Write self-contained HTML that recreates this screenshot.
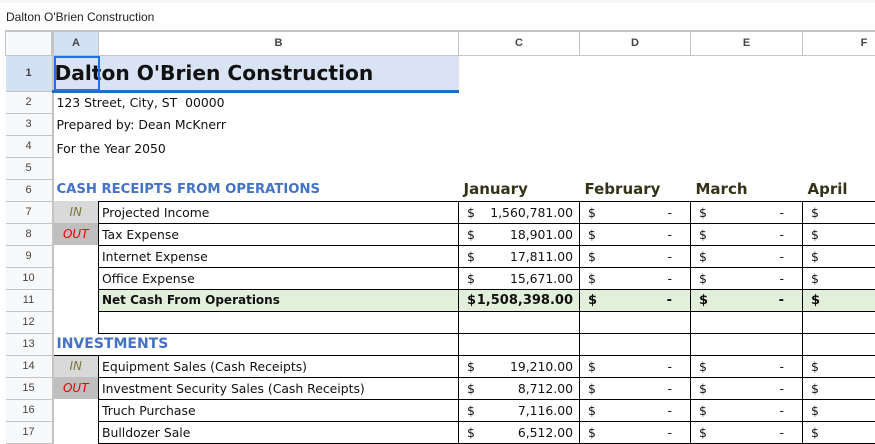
<!DOCTYPE html>
<html><head><meta charset="utf-8"><style>
*{margin:0;padding:0;box-sizing:border-box}
body{width:875px;height:440px;overflow:hidden;background:#fff;font-family:"DejaVu Sans","Liberation Sans",sans-serif;position:relative}
#top{position:absolute;left:0;top:0;width:875px;height:30px;background:#fff;border-top:3px solid #f5f6f7}
#top span{position:absolute;left:6px;top:7px;font:12px "Liberation Sans",sans-serif;color:#222}
table{position:absolute;left:5px;top:30px;border-collapse:collapse;table-layout:fixed;width:920px}
td{height:22px;padding:0;font-size:12.4px;color:#111;white-space:nowrap;overflow:visible;vertical-align:middle}
tr.h td{height:24px;border:1px solid #c4c4c4;border-top:2px solid #c4c4c4;font:bold 11px "Liberation Sans",sans-serif;color:#444;text-align:center;background:#fff}
td.rh{background:#f8f9fa;border-right:2px solid #c4c4c4;border-bottom:1px solid #c4c4c4;font:11px "Liberation Sans",sans-serif;color:#444;text-align:center}
tr.h td.sel{background:#d3e1f5}
td.b{border:1px solid #000;padding-left:3px}
td.a{text-align:center;font-style:italic;font-size:12px}
.in{background:#d9d9d9;color:#7a7a3a}
.out{background:#bfbfbf;color:#e00}
.m{border:1px solid #000}
.m div{display:flex;justify-content:space-between;padding:0 6px 0 8px}
.m.d div{padding:0 18px 0 8px}
.tot{background:#e2efda;font-weight:bold;font-size:13px}
.mon{font-weight:bold;font-size:15px;color:#333319;vertical-align:middle;padding:0 0 2px 5px}
.sec{font-weight:bold;font-size:13.2px;color:#4472c4;padding:0 0 1px 3px;vertical-align:middle}
</style></head><body>
<div id="top"><span>Dalton O'Brien Construction</span></div>
<table>
<colgroup><col style="width:47px"><col style="width:46px"><col style="width:360px"><col style="width:121px"><col style="width:111px"><col style="width:112px"><col style="width:123px"></colgroup>
<tr class="h"><td style="background:#f8f9fa;border-right:3px solid #c4c4c4"></td><td class="sel">A</td><td>B</td><td>C</td><td>D</td><td>E</td><td>F</td></tr>
<tr><td class="rh" style="height:36px;background:#d3e1f5;font-weight:bold">1</td><td colspan="2" style="background:#dae3f3;border-bottom:3px solid #1f6fc1;position:relative;font-weight:bold;font-size:20.2px;padding-left:1px"><div style="position:absolute;left:0;top:0;width:46px;height:35px;border:2px solid #1a73e8"></div>Dalton O'Brien Construction</td><td></td><td></td><td></td><td></td></tr>
<tr><td class="rh">2</td><td colspan="2" style="padding-left:3px">123 Street, City, ST &nbsp;00000</td><td></td><td></td><td></td><td></td></tr>
<tr><td class="rh">3</td><td colspan="2" style="padding-left:3px">Prepared by: Dean McKnerr</td><td></td><td></td><td></td><td></td></tr>
<tr><td class="rh">4</td><td colspan="2" style="padding-left:3px;vertical-align:bottom;padding-bottom:1px">For the Year 2050</td><td></td><td></td><td></td><td></td></tr>
<tr><td class="rh">5</td><td></td><td></td><td></td><td></td><td></td><td></td></tr>
<tr><td class="rh">6</td><td colspan="2" class="sec">CASH RECEIPTS FROM OPERATIONS</td><td class="mon">January</td><td class="mon">February</td><td class="mon">March</td><td class="mon">April</td></tr>
<tr><td class="rh">7</td><td class="a in">IN</td><td class="b">Projected Income</td><td class="m"><div><span>$</span><span>1,560,781.00</span></div></td><td class="m d"><div><span>$</span><span>-</span></div></td><td class="m d"><div><span>$</span><span>-</span></div></td><td class="m d"><div><span>$</span><span></span></div></td></tr>
<tr><td class="rh">8</td><td class="a out">OUT</td><td class="b">Tax Expense</td><td class="m"><div><span>$</span><span>18,901.00</span></div></td><td class="m d"><div><span>$</span><span>-</span></div></td><td class="m d"><div><span>$</span><span>-</span></div></td><td class="m d"><div><span>$</span><span></span></div></td></tr>
<tr><td class="rh">9</td><td></td><td class="b">Internet Expense</td><td class="m"><div><span>$</span><span>17,811.00</span></div></td><td class="m d"><div><span>$</span><span>-</span></div></td><td class="m d"><div><span>$</span><span>-</span></div></td><td class="m d"><div><span>$</span><span></span></div></td></tr>
<tr><td class="rh">10</td><td></td><td class="b">Office Expense</td><td class="m"><div><span>$</span><span>15,671.00</span></div></td><td class="m d"><div><span>$</span><span>-</span></div></td><td class="m d"><div><span>$</span><span>-</span></div></td><td class="m d"><div><span>$</span><span></span></div></td></tr>
<tr><td class="rh">11</td><td></td><td class="b tot" style="font-size:12px">Net Cash From Operations</td><td class="m tot"><div><span>$</span><span>1,508,398.00</span></div></td><td class="m d tot"><div><span>$</span><span>-</span></div></td><td class="m d tot"><div><span>$</span><span>-</span></div></td><td class="m d tot"><div><span>$</span><span></span></div></td></tr>
<tr><td class="rh">12</td><td></td><td class="b"></td><td class="m"></td><td class="m"></td><td class="m"></td><td class="m"></td></tr>
<tr><td class="rh">13</td><td colspan="2" class="sec" style="border-bottom:1px solid #000;font-size:14px">INVESTMENTS</td><td class="m"></td><td class="m"></td><td class="m"></td><td class="m"></td></tr>
<tr><td class="rh">14</td><td class="a in">IN</td><td class="b">Equipment Sales (Cash Receipts)</td><td class="m"><div><span>$</span><span>19,210.00</span></div></td><td class="m d"><div><span>$</span><span>-</span></div></td><td class="m d"><div><span>$</span><span>-</span></div></td><td class="m d"><div><span>$</span><span></span></div></td></tr>
<tr><td class="rh">15</td><td class="a out">OUT</td><td class="b">Investment Security Sales (Cash Receipts)</td><td class="m"><div><span>$</span><span>8,712.00</span></div></td><td class="m d"><div><span>$</span><span>-</span></div></td><td class="m d"><div><span>$</span><span>-</span></div></td><td class="m d"><div><span>$</span><span></span></div></td></tr>
<tr><td class="rh">16</td><td></td><td class="b">Truch Purchase</td><td class="m"><div><span>$</span><span>7,116.00</span></div></td><td class="m d"><div><span>$</span><span>-</span></div></td><td class="m d"><div><span>$</span><span>-</span></div></td><td class="m d"><div><span>$</span><span></span></div></td></tr>
<tr><td class="rh">17</td><td></td><td class="b">Bulldozer Sale</td><td class="m"><div><span>$</span><span>6,512.00</span></div></td><td class="m d"><div><span>$</span><span>-</span></div></td><td class="m d"><div><span>$</span><span>-</span></div></td><td class="m d"><div><span>$</span><span></span></div></td></tr>
</table>
</body></html>
